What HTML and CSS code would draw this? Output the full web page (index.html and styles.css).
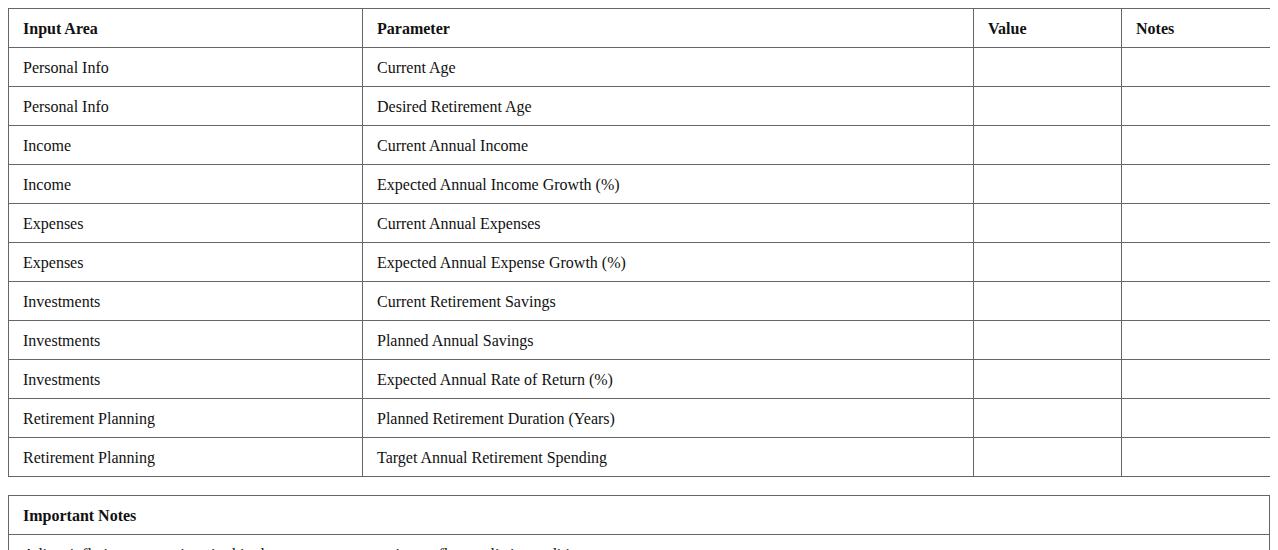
FILE: index.html
```html
<!DOCTYPE html>
<html>
<head>
<meta charset="utf-8">
<link rel="stylesheet" href="styles.css">
</head>
<body>
<table class="grid">
  <colgroup>
    <col class="c-area">
    <col class="c-param">
    <col class="c-value">
    <col class="c-notes">
  </colgroup>
  <thead>
    <tr><th>Input Area</th><th>Parameter</th><th>Value</th><th>Notes</th></tr>
  </thead>
  <tbody>
    <tr><td>Personal Info</td><td>Current Age</td><td></td><td></td></tr>
    <tr><td>Personal Info</td><td>Desired Retirement Age</td><td></td><td></td></tr>
    <tr><td>Income</td><td>Current Annual Income</td><td></td><td></td></tr>
    <tr><td>Income</td><td>Expected Annual Income Growth (%)</td><td></td><td></td></tr>
    <tr><td>Expenses</td><td>Current Annual Expenses</td><td></td><td></td></tr>
    <tr><td>Expenses</td><td>Expected Annual Expense Growth (%)</td><td></td><td></td></tr>
    <tr><td>Investments</td><td>Current Retirement Savings</td><td></td><td></td></tr>
    <tr><td>Investments</td><td>Planned Annual Savings</td><td></td><td></td></tr>
    <tr><td>Investments</td><td>Expected Annual Rate of Return (%)</td><td></td><td></td></tr>
    <tr><td>Retirement Planning</td><td>Planned Retirement Duration (Years)</td><td></td><td></td></tr>
    <tr><td>Retirement Planning</td><td>Target Annual Retirement Spending</td><td></td><td></td></tr>
  </tbody>
</table>
<table class="grid notes">
  <thead>
    <tr><th>Important Notes</th></tr>
  </thead>
  <tbody>
    <tr><td>Adjust inflation assumptions in this sheet so your assumptions reflect realistic conditions.</td></tr>
  </tbody>
</table>
</body>
</html>
```
FILE: styles.css
```css
html, body {
  background: #ffffff;
}
body {
  margin: 8px;
  font-family: "Liberation Serif", "Times New Roman", serif;
  font-size: 16px;
  color: #111111;
}
.grid {
  width: 100%;
  border-collapse: collapse;
  table-layout: fixed;
}
.grid th,
.grid td {
  border: 1px solid #666666;
  padding: 11px 14px 9px;
  line-height: 18px;
  text-align: left;
  vertical-align: middle;
}
.grid th {
  font-weight: bold;
}
.c-area { width: 354px; }
.c-param { width: 611px; }
.c-value { width: 148px; }
.c-notes { width: 149px; }
.notes {
  margin-top: 18px;
}
```
